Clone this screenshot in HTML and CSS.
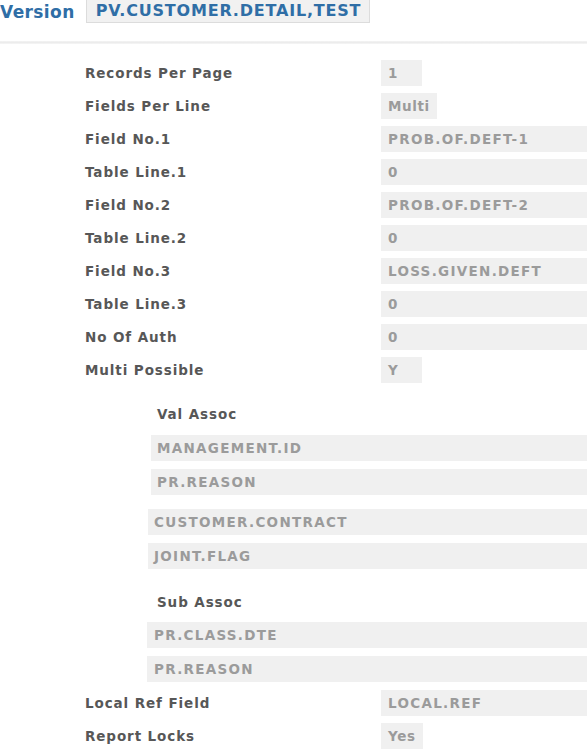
FILE: index.html
```html
<!DOCTYPE html>
<html>
<head>
<meta charset="utf-8">
<link rel="stylesheet" href="styles.css">
</head>
<body>
<header class="top">
  <span class="ver-label">Version</span>
  <span class="ver-box">PV.CUSTOMER.DETAIL,TEST</span>
</header>
<div class="rule"></div>
<main class="form">
  <div class="row"><span class="lbl">Records Per Page</span><span class="val narrow">1</span></div>
  <div class="row"><span class="lbl">Fields Per Line</span><span class="val narrow">Multi</span></div>
  <div class="row"><span class="lbl">Field No.1</span><span class="val">PROB.OF.DEFT-1</span></div>
  <div class="row"><span class="lbl">Table Line.1</span><span class="val">0</span></div>
  <div class="row"><span class="lbl">Field No.2</span><span class="val">PROB.OF.DEFT-2</span></div>
  <div class="row"><span class="lbl">Table Line.2</span><span class="val">0</span></div>
  <div class="row"><span class="lbl">Field No.3</span><span class="val">LOSS.GIVEN.DEFT</span></div>
  <div class="row"><span class="lbl">Table Line.3</span><span class="val">0</span></div>
  <div class="row"><span class="lbl">No Of Auth</span><span class="val">0</span></div>
  <div class="row"><span class="lbl">Multi Possible</span><span class="val narrow">Y</span></div>

  <section class="assoc val-assoc">
    <div class="sub-lbl">Val Assoc</div>
    <div class="sub-val a1">MANAGEMENT.ID</div>
    <div class="sub-val a1">PR.REASON</div>
    <div class="sub-val a2 gap-top">CUSTOMER.CONTRACT</div>
    <div class="sub-val a2">JOINT.FLAG</div>
  </section>

  <section class="assoc sub-assoc">
    <div class="sub-lbl">Sub Assoc</div>
    <div class="sub-val a3">PR.CLASS.DTE</div>
    <div class="sub-val a3">PR.REASON</div>
  </section>

  <div class="row"><span class="lbl">Local Ref Field</span><span class="val">LOCAL.REF</span></div>
  <div class="row"><span class="lbl">Report Locks</span><span class="val narrow">Yes</span></div>
</main>
</body>
</html>
```
FILE: styles.css
```css
* { box-sizing: border-box; }
html, body { margin: 0; padding: 0; background: #fff; }
body {
  font-family: "DejaVu Sans", Verdana, sans-serif;
  font-weight: bold;
  overflow: hidden;
}
.top {
  display: flex;
  align-items: center;
  gap: 11px;
  height: 23px;
}
.ver-label {
  color: #2f6ea6;
  font-size: 17px;
  letter-spacing: 0.4px;
}
.ver-box {
  display: flex;
  align-items: center;
  height: 24px;
  margin-top: -2px;
  padding: 0 8px 0 9px;
  background: #f1f1f1;
  border: 1px solid #dcdcdc;
  border-top: none;
  color: #2f6ea6;
  font-size: 16px;
  letter-spacing: 0.8px;
}
.rule {
  margin-top: 18px;
  height: 3px;
  background: linear-gradient(#f4f4f4, #ececec, #f6f6f6);
}
.form {
  padding: 16px 0 0 85px;
}
.row {
  display: grid;
  grid-template-columns: 296px 1fr;
  align-items: center;
  height: 26px;
  margin-bottom: 7px;
}
.lbl, .sub-lbl {
  color: #575757;
  font-size: 13.5px;
  letter-spacing: 0.9px;
}
.val, .sub-val {
  display: flex;
  align-items: center;
  height: 26px;
  background: #f0f0f0;
  color: #9b9b9b;
  font-size: 13.5px;
  letter-spacing: 1.3px;
  white-space: nowrap;
}
.val {
  padding: 0 7px;
}
.narrow {
  justify-self: start;
  min-width: 41px;
  letter-spacing: 0.6px;
}
.assoc {
  margin-left: -85px;
  display: flex;
  flex-direction: column;
}
.val-assoc { padding-top: 17px; }
.sub-assoc { padding-top: 18px; }
.sub-lbl {
  margin-left: 157px;
  height: 14px;
  line-height: 14px;
  margin-bottom: 14px;
}
.sub-assoc .sub-lbl { margin-bottom: 13px; }
.sub-val {
  margin-bottom: 8px;
}
.a1 { margin-left: 151px; padding-left: 6px; }
.a2 { margin-left: 148px; padding-left: 6px; }
.a3 { margin-left: 147px; padding-left: 7px; }
.gap-top { margin-top: 6px; }
```
